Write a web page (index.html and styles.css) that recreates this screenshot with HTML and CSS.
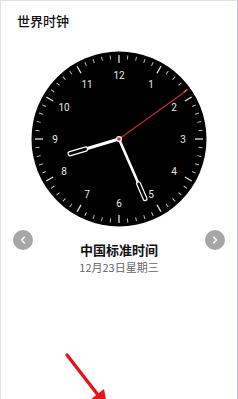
FILE: index.html
```html
<!DOCTYPE html>
<html lang="zh">
<head>
<meta charset="utf-8">
<title>世界时钟</title>
<link rel="stylesheet" href="styles.css">
</head>
<body>
<div class="page">
  <h1 class="title">世界时钟</h1>
  <div class="clock-wrap">
    <svg class="clock" width="178" height="178" viewBox="-89 -89 178 178">
      <defs>
        <line id="mt" x1="0" y1="-84" x2="0" y2="-80" stroke="#bdbdbd" stroke-width="1"/>
        <line id="ht" x1="0" y1="-84" x2="0" y2="-76" stroke="#e0e0e0" stroke-width="1.3"/>
      </defs>
      <circle cx="0" cy="0" r="87.5" fill="#000"/>
      <g>
        <use href="#ht" transform="rotate(0)"/><use href="#mt" transform="rotate(6)"/><use href="#mt" transform="rotate(12)"/><use href="#mt" transform="rotate(18)"/><use href="#mt" transform="rotate(24)"/>
        <use href="#ht" transform="rotate(30)"/><use href="#mt" transform="rotate(36)"/><use href="#mt" transform="rotate(42)"/><use href="#mt" transform="rotate(48)"/><use href="#mt" transform="rotate(54)"/>
        <use href="#ht" transform="rotate(60)"/><use href="#mt" transform="rotate(66)"/><use href="#mt" transform="rotate(72)"/><use href="#mt" transform="rotate(78)"/><use href="#mt" transform="rotate(84)"/>
        <use href="#ht" transform="rotate(90)"/><use href="#mt" transform="rotate(96)"/><use href="#mt" transform="rotate(102)"/><use href="#mt" transform="rotate(108)"/><use href="#mt" transform="rotate(114)"/>
        <use href="#ht" transform="rotate(120)"/><use href="#mt" transform="rotate(126)"/><use href="#mt" transform="rotate(132)"/><use href="#mt" transform="rotate(138)"/><use href="#mt" transform="rotate(144)"/>
        <use href="#ht" transform="rotate(150)"/><use href="#mt" transform="rotate(156)"/><use href="#mt" transform="rotate(162)"/><use href="#mt" transform="rotate(168)"/><use href="#mt" transform="rotate(174)"/>
        <use href="#ht" transform="rotate(180)"/><use href="#mt" transform="rotate(186)"/><use href="#mt" transform="rotate(192)"/><use href="#mt" transform="rotate(198)"/><use href="#mt" transform="rotate(204)"/>
        <use href="#ht" transform="rotate(210)"/><use href="#mt" transform="rotate(216)"/><use href="#mt" transform="rotate(222)"/><use href="#mt" transform="rotate(228)"/><use href="#mt" transform="rotate(234)"/>
        <use href="#ht" transform="rotate(240)"/><use href="#mt" transform="rotate(246)"/><use href="#mt" transform="rotate(252)"/><use href="#mt" transform="rotate(258)"/><use href="#mt" transform="rotate(264)"/>
        <use href="#ht" transform="rotate(270)"/><use href="#mt" transform="rotate(276)"/><use href="#mt" transform="rotate(282)"/><use href="#mt" transform="rotate(288)"/><use href="#mt" transform="rotate(294)"/>
        <use href="#ht" transform="rotate(300)"/><use href="#mt" transform="rotate(306)"/><use href="#mt" transform="rotate(312)"/><use href="#mt" transform="rotate(318)"/><use href="#mt" transform="rotate(324)"/>
        <use href="#ht" transform="rotate(330)"/><use href="#mt" transform="rotate(336)"/><use href="#mt" transform="rotate(342)"/><use href="#mt" transform="rotate(348)"/><use href="#mt" transform="rotate(354)"/>
      </g>
      <g class="nums">
        <text x="0" y="-63.5">12</text>
        <text x="32" y="-55">1</text>
        <text x="55" y="-32">2</text>
        <text x="64" y="0">3</text>
        <text x="55" y="32">4</text>
        <text x="32" y="55">5</text>
        <text x="0" y="64">6</text>
        <text x="-32" y="55">7</text>
        <text x="-55" y="32">8</text>
        <text x="-64" y="0">9</text>
        <text x="-55" y="-32">10</text>
        <text x="-32" y="-55">11</text>
      </g>
      <g transform="rotate(253.3)">
        <line x1="0" y1="0" x2="0" y2="-34" stroke="#fff" stroke-width="3.2"/>
        <rect x="-2.1" y="-53" width="4.2" height="20" rx="2" fill="#000" stroke="#fff" stroke-width="1.3"/>
      </g>
      <g transform="rotate(156.4)">
        <line x1="0" y1="0" x2="0" y2="-48" stroke="#fff" stroke-width="2.6"/>
        <rect x="-1.9" y="-67" width="3.8" height="20" rx="1.9" fill="#000" stroke="#fff" stroke-width="1.2"/>
      </g>
      <g transform="rotate(54.4)">
        <line x1="0" y1="0" x2="0" y2="-85" stroke="#d8283a" stroke-width="1"/>
      </g>
      <circle cx="0" cy="0" r="3" fill="#fff"/>
      <circle cx="0" cy="0" r="1.8" fill="#d8283a"/>
    </svg>
  </div>
  <div class="zone-row">
    <button class="nav" aria-label="上一个">
      <svg width="20" height="20" viewBox="0 0 20 20"><path d="M11.5 7 L8.5 10 L11.5 13" fill="none" stroke="#fff" stroke-width="1.4" stroke-linecap="round" stroke-linejoin="round"/></svg>
    </button>
    <div class="zone-info">
      <div class="zone-name">中国标准时间</div>
      <div class="zone-date">12月23日星期三</div>
    </div>
    <button class="nav" aria-label="下一个">
      <svg width="20" height="20" viewBox="0 0 20 20"><path d="M8.5 7 L11.5 10 L8.5 13" fill="none" stroke="#fff" stroke-width="1.4" stroke-linecap="round" stroke-linejoin="round"/></svg>
    </button>
  </div>
  <svg class="annot" width="238" height="399" viewBox="0 0 238 399">
    <line x1="67" y1="355" x2="98" y2="395" stroke="#e5141c" stroke-width="3.4" stroke-linecap="round"/>
    <polygon points="104,389 90,400 108,410" fill="#e5141c"/>
  </svg>
</div>
</body>
</html>
```
FILE: styles.css
```css
* { box-sizing: border-box; }
html, body {
  margin: 0;
  padding: 0;
  background: #fff;
}
.page {
  position: relative;
  width: 238px;
  height: 399px;
  overflow: hidden;
  border-top: 1px solid #e3e3e3;
  border-left: 1px solid #e3e3e3;
  border-right: 1px solid #b3c3d3;
  font-family: "Noto Sans CJK SC", "Noto Sans", sans-serif;
}
.title {
  margin: 0;
  padding: 11px 0 0 16px;
  font-size: 13px;
  line-height: 18px;
  font-weight: 500;
  color: #111;
}
.clock-wrap {
  display: flex;
  justify-content: center;
  margin-top: 20px;
}
.clock { display: block; }
.nums text {
  font-family: Roboto, "Noto Sans", sans-serif;
  font-size: 10px;
  fill: #e8e8e8;
  text-anchor: middle;
  dominant-baseline: central;
}
.zone-row {
  display: flex;
  justify-content: space-between;
  align-items: flex-start;
  padding: 0 12px 0 12px;
  margin-top: 2px;
}
.nav {
  width: 20px;
  height: 20px;
  padding: 0;
  border: none;
  border-radius: 50%;
  background: #a6a6a6;
  display: flex;
  align-items: center;
  justify-content: center;
}
.nav svg { display: block; }
.zone-info {
  display: flex;
  flex-direction: column;
  align-items: center;
  padding-top: 11px;
}
.zone-name {
  font-size: 13px;
  line-height: 18px;
  font-weight: 700;
  color: #111;
}
.zone-date {
  margin-top: 1px;
  font-size: 11px;
  line-height: 15px;
  color: #666;
}
.annot {
  position: absolute;
  left: -1px;
  top: -1px;
  pointer-events: none;
}
```
